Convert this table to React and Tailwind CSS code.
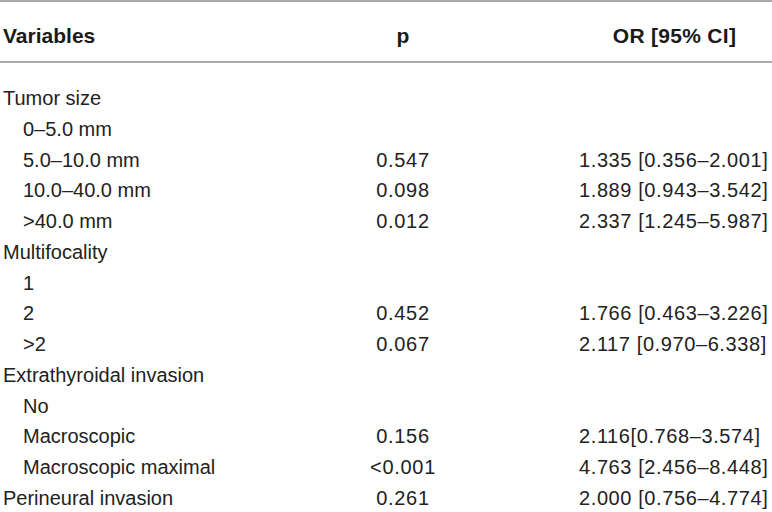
import React from 'react';

const rows = [
    { label: 'Tumor size', indent: false, p: '', or: '' },
    { label: '0–5.0 mm', indent: true, p: '', or: '' },
    { label: '5.0–10.0 mm', indent: true, p: '0.547', or: '1.335 [0.356–2.001]' },
    { label: '10.0–40.0 mm', indent: true, p: '0.098', or: '1.889 [0.943–3.542]' },
    { label: '>40.0 mm', indent: true, p: '0.012', or: '2.337 [1.245–5.987]' },
    { label: 'Multifocality', indent: false, p: '', or: '' },
    { label: '1', indent: true, p: '', or: '' },
    { label: '2', indent: true, p: '0.452', or: '1.766 [0.463–3.226]' },
    { label: '>2', indent: true, p: '0.067', or: '2.117 [0.970–6.338]' },
    { label: 'Extrathyroidal invasion', indent: false, p: '', or: '' },
    { label: 'No', indent: true, p: '', or: '' },
    { label: 'Macroscopic', indent: true, p: '0.156', or: '2.116[0.768–3.574]' },
    { label: 'Macroscopic maximal', indent: true, p: '<0.001', or: '4.763 [2.456–8.448]' },
    { label: 'Perineural invasion', indent: false, p: '0.261', or: '2.000 [0.756–4.774]' },
];

const App = () => {
    return (
        <div
            className="w-[772px] h-[512px] overflow-hidden bg-white text-[#222]"
            style={{ fontFamily: "'Liberation Sans', Arial, sans-serif" }}
        >
            {/* Top rule */}
            <div className="h-[2px] bg-[#ababab]" />

            {/* Header */}
            <div className="grid grid-cols-[340px_126px_1fr] h-[59px] pt-[23px] text-[21px] leading-[21px] font-bold text-[#1a1a1a]">
                <div className="pl-[3px]">Variables</div>
                <div className="text-center">p</div>
                <div className="pl-[111px] text-center tracking-[0.3px]">OR [95% CI]</div>
            </div>

            {/* Header rule */}
            <div className="h-[2px] bg-[#ababab]" />

            {/* Body */}
            <div className="pt-[20px] text-[20px] leading-[30.77px]">
                {rows.map((row, i) => (
                    <div key={i} className="grid grid-cols-[340px_126px_1fr] h-[30.77px] whitespace-nowrap">
                        <div className={row.indent ? 'pl-[23px]' : 'pl-[3px]'}>{row.label}</div>
                        <div className="text-center tracking-[0.7px]">{row.p}</div>
                        <div className="pl-[113px] tracking-[0.6px]">{row.or}</div>
                    </div>
                ))}
            </div>
        </div>
    );
};

export default App;
